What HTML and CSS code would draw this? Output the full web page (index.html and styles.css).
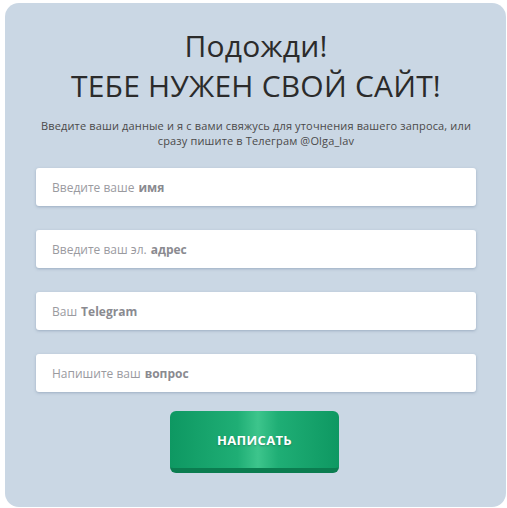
FILE: index.html
```html
<!DOCTYPE html>
<html lang="ru">
<head>
<meta charset="utf-8">
<link rel="stylesheet" href="styles.css">
</head>
<body>
<div class="card">
  <h1 class="title">Подожди!<br>ТЕБЕ НУЖЕН СВОЙ САЙТ!</h1>
  <p class="lead">Введите ваши данные и я с вами свяжусь для уточнения вашего запроса, или сразу пишите в Телеграм @Olga_lav</p>
  <form class="form">
    <div class="field">Введите ваше <b>имя</b></div>
    <div class="field">Введите ваш эл. <b>адрес</b></div>
    <div class="field">Ваш <b>Telegram</b></div>
    <div class="field">Напишите ваш <b>вопрос</b></div>
    <div class="btn-row"><button type="button" class="btn">НАПИСАТЬ</button></div>
  </form>
</div>
</body>
</html>
```
FILE: styles.css
```css
html, body { margin: 0; padding: 0; background: #fff; }
body { padding: 3px 1px 1px 5px; font-family: "Open Sans", "DejaVu Sans", sans-serif; }
.card {
  background: #cad7e4;
  border-radius: 14px;
  height: 504px;
  box-sizing: border-box;
  padding: 23px 30px 0 31px;
  display: flex;
  flex-direction: column;
  align-items: stretch;
}
.title {
  margin: 0;
  text-align: center;
  font-weight: 400;
  font-size: 30px;
  line-height: 40px;
  color: #2b2b2b;
  letter-spacing: 0.2px;
}
.lead {
  margin: 12px 0 0;
  text-align: center;
  font-size: 11px;
  line-height: 15px;
  color: #4a4a4a;
  letter-spacing: 0.15px;
}
.form { margin: 20px 0 0; display: flex; flex-direction: column; }
.field {
  height: 38px;
  background: #fff;
  border-radius: 3px;
  box-shadow: 0 1px 3px rgba(120,140,165,0.55);
  display: flex;
  align-items: center;
  padding-left: 16px;
  font-size: 12px;
  color: #9a9a9f;
  margin-bottom: 24px;
}
.field b { color: #8a8a90; font-weight: 700; margin-left: 4px; }
.btn-row { display: flex; justify-content: center; margin-top: -5px; padding-right: 3px; }
.btn {
  width: 169px;
  height: 62px;
  border: none;
  border-radius: 6px;
  border-bottom: 5px solid #0b7d50;
  background: linear-gradient(90deg, #0e9862 0%, #1fae75 40%, #3dc58c 52%, #1fae75 64%, #0e9862 100%);
  color: #fff;
  font-family: "Open Sans", sans-serif;
  font-weight: 700;
  font-size: 13px;
  letter-spacing: 0.3px;
  text-shadow: 0 1px 2px rgba(0,0,0,0.25);
}
```
